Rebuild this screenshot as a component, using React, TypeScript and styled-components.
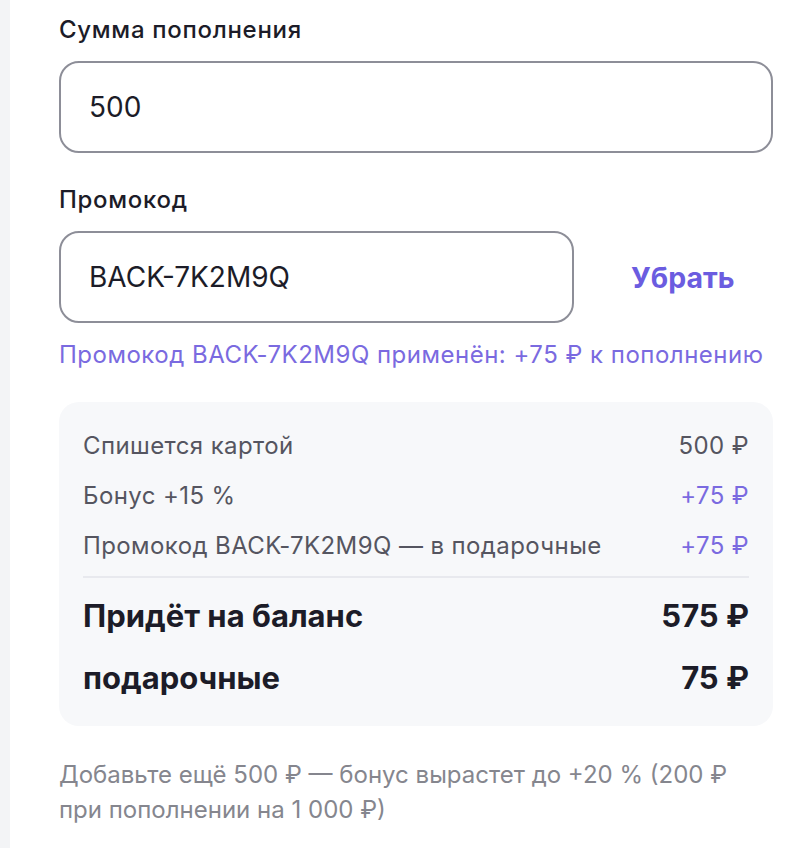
import React from "react";
import styled, { createGlobalStyle } from "styled-components";

const Global = createGlobalStyle`
  html, body { margin: 0; padding: 0; background: #ffffff; }
  body { font-family: Inter, "Noto Sans", sans-serif; -webkit-font-smoothing: antialiased; }
`;

const Page = styled.div`
  display: flex;
  min-height: 848px;
`;

const Rail = styled.div`
  width: 10px;
  flex: none;
  background: #f3f4f6;
`;

const Content = styled.div`
  flex: 1;
  padding: 16px 39px 0 49px;
  display: flex;
  flex-direction: column;
`;

const Label = styled.div`
  font-size: 24px;
  font-weight: 500;
  letter-spacing: 0.7px;
  color: #1c1c28;
  line-height: 28px;
  margin-bottom: 17px;
`;

const Field = styled.div<{ $width?: string }>`
  box-sizing: border-box;
  width: ${(p) => p.$width || "100%"};
  height: 92px;
  border: 2px solid #8d8e98;
  border-radius: 20px;
  display: flex;
  align-items: center;
  padding: 0 28px;
  font-size: 28px;
  color: #1c1c28;
  background: #fff;
`;

const Group = styled.div`
  display: flex;
  flex-direction: column;
  margin-bottom: 33px;
`;

const PromoRow = styled.div`
  display: flex;
  align-items: center;
`;

const RemoveButton = styled.button`
  border: none;
  background: none;
  padding: 0;
  margin-left: 57px;
  font-family: inherit;
  font-size: 28.5px;
  font-weight: 700;
  color: #6b5ce0;
  cursor: pointer;
`;

const Hint = styled.div`
  margin-top: 18px;
  font-size: 24px;
  line-height: 28px;
  letter-spacing: 0.5px;
  color: #7a6ae0;
  white-space: nowrap;
`;

const Summary = styled.div`
  margin-top: 33px;
  background: #f7f8fa;
  border-radius: 20px;
  padding: 18px 24px 18px;
  display: flex;
  flex-direction: column;
`;

const Row = styled.div<{ $strong?: boolean }>`
  display: flex;
  justify-content: space-between;
  align-items: center;
  height: ${(p) => (p.$strong ? "62px" : "50px")};
  font-size: ${(p) => (p.$strong ? "31px" : "24px")};
  font-weight: ${(p) => (p.$strong ? 700 : 400)};
  letter-spacing: ${(p) => (p.$strong ? "0" : "0.4px")};
  color: ${(p) => (p.$strong ? "#1c1c28" : "#555560")};
`;

const Value = styled.span<{ $accent?: boolean }>`
  color: ${(p) => (p.$accent ? "#7a6ae0" : "inherit")};
`;

const Divider = styled.div`
  height: 2px;
  background: #e8e9ee;
  margin: 6px 0 6px;
`;

const Note = styled.p`
  margin: 31px 0 0;
  font-size: 24px;
  line-height: 35px;
  color: #85868e;
`;

export default function App() {
  return (
    <>
      <Global />
      <Page>
        <Rail />
        <Content>
          <Group>
            <Label>Сумма пополнения</Label>
            <Field>500</Field>
          </Group>
          <Label>Промокод</Label>
          <PromoRow>
            <Field $width="515px">BACK-7K2M9Q</Field>
            <RemoveButton>Убрать</RemoveButton>
          </PromoRow>
          <Hint>Промокод BACK-7K2M9Q применён: +75 ₽ к пополнению</Hint>
          <Summary>
            <Row>
              <span>Спишется картой</span>
              <Value>500 ₽</Value>
            </Row>
            <Row>
              <span>Бонус +15 %</span>
              <Value $accent>+75 ₽</Value>
            </Row>
            <Row>
              <span>Промокод BACK-7K2M9Q — в подарочные</span>
              <Value $accent>+75 ₽</Value>
            </Row>
            <Divider />
            <Row $strong>
              <span>Придёт на баланс</span>
              <Value>575 ₽</Value>
            </Row>
            <Row $strong>
              <span>подарочные</span>
              <Value>75 ₽</Value>
            </Row>
          </Summary>
          <Note>
            Добавьте ещё 500 ₽ — бонус вырастет до +20 % (200 ₽ при пополнении на 1 000 ₽)
          </Note>
        </Content>
      </Page>
    </>
  );
}
